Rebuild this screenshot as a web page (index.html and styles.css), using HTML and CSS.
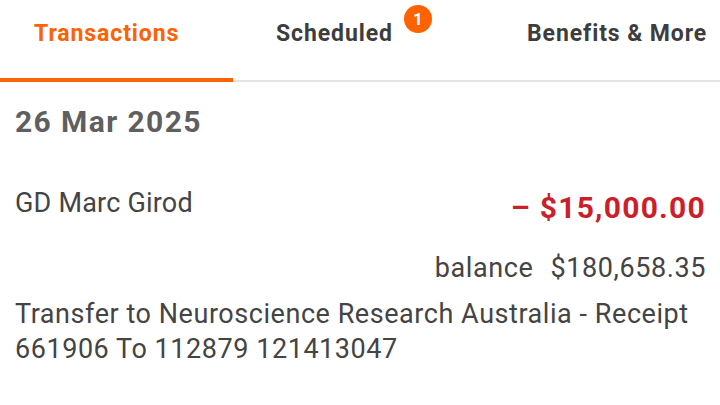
FILE: index.html
```html
<!DOCTYPE html>
<html>
<head>
<meta charset="utf-8">
<link rel="stylesheet" href="styles.css">
</head>
<body>
<nav class="tabs">
  <div class="tab tab-1 active">Transactions</div>
  <div class="tab tab-2">Scheduled<span class="badge">1</span></div>
  <div class="tab tab-3">Benefits &amp; More</div>
</nav>
<main class="content">
  <h2 class="date">26 Mar 2025</h2>
  <div class="row">
    <div class="name">GD Marc Girod</div>
    <div class="amount">– $15,000.00</div>
  </div>
  <div class="balance"><span class="bal-label">balance</span><span>$180,658.35</span></div>
  <p class="desc">Transfer to Neuroscience Research Australia - Receipt 661906 To 112879 121413047</p>
</main>
</body>
</html>
```
FILE: styles.css
```css
* { box-sizing: border-box; }
html, body { margin: 0; padding: 0; background: #fff; }
body {
  width: 720px;
  height: 405px;
  overflow: hidden;
  font-family: Roboto, "Noto Sans", sans-serif;
  color: #444;
}
.tabs {
  display: grid;
  grid-template-columns: 233px 250px 1fr;
  height: 82px;
  border-bottom: 2px solid #e3e3e3;
}
.tab {
  position: relative;
  display: flex;
  padding-top: 20px;
  font-size: 23px;
  font-weight: 700;
  letter-spacing: 0.9px;
  color: #3d3d3d;
}
.tab-1 { padding-left: 34px; }
.tab-2 { padding-left: 43px; }
.tab-3 { padding-left: 44px; }
.tab.active {
  color: #ff6200;
  border-bottom: 4px solid #ff6200;
  margin-bottom: -2px;
}
.badge {
  position: absolute;
  top: 5px;
  left: 171px;
  width: 28px;
  height: 28px;
  border-radius: 50%;
  background: #ff6200;
  color: #fff;
  font-size: 17px;
  font-weight: 700;
  letter-spacing: 0;
  display: flex;
  align-items: center;
  justify-content: center;
}
.content { padding: 0 15px; }
.date {
  margin: 22px 0 0;
  font-size: 30px;
  font-weight: 700;
  letter-spacing: 1.4px;
  color: #5f5f5f;
}
.row {
  display: flex;
  justify-content: space-between;
  align-items: flex-start;
  margin-top: 48px;
}
.name { font-size: 27px; letter-spacing: 0.2px; font-weight: 400; }
.amount {
  font-size: 30px;
  font-weight: 700;
  letter-spacing: 1.25px;
  color: #cd1f2b;
  padding-top: 3px;
  margin-right: -1px;
}
.balance {
  display: flex;
  justify-content: flex-end;
  gap: 17px;
  font-size: 27px;
  letter-spacing: 0.6px;
  margin-top: 27px;
  margin-right: -1px;
}
.desc {
  margin: 13px 0 0;
  font-size: 27px;
  line-height: 35px;
  letter-spacing: 0.55px;
}
```
